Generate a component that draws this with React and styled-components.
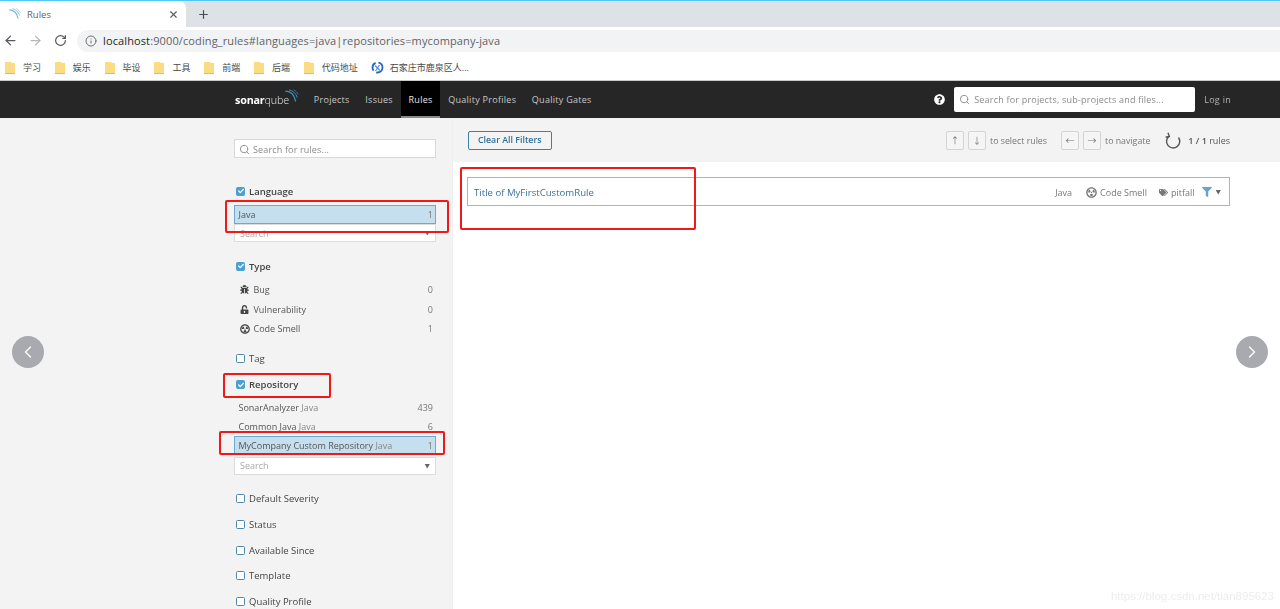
import React from "react";
import styled, { createGlobalStyle } from "styled-components";
import { ArrowLeft, ArrowRight, RotateCw, Info, X, Plus, Search, ChevronLeft, ChevronRight } from "lucide-react";
import { FaBug, FaUnlockAlt, FaRadiationAlt, FaTags, FaFilter, FaQuestionCircle, FaCheck } from "react-icons/fa";

const GlobalStyle = createGlobalStyle`
  html, body {
    margin: 0;
    padding: 0;
    height: 609px;
    overflow: hidden;
    background: #fff;
    font-family: "Open Sans", "Noto Sans CJK SC", sans-serif;
  }
  * { box-sizing: border-box; }
`;

const Screen = styled.div`
  position: relative;
  width: 1280px;
  height: 609px;
  overflow: hidden;
  display: flex;
  flex-direction: column;
  filter: blur(0.3px);
`;

/* browser chrome */
const TabStrip = styled.div`
  height: 27px;
  flex: none;
  display: flex;
  align-items: stretch;
  background: #dee1e6;
  border-top: 1px solid #4fc8f5;
`;

const Tab = styled.div`
  width: 186px;
  display: flex;
  align-items: center;
  padding: 0 7px 0 9px;
  background: #fff;
  border-top-right-radius: 7px;
  color: #5f6368;
  font-size: 9.5px;
`;

const TabTitle = styled.span`
  flex: 1;
  margin-left: 6px;
`;

const NewTab = styled.div`
  width: 34px;
  display: flex;
  align-items: center;
  justify-content: center;
  color: #4a4d51;
`;

const AddressRow = styled.div`
  height: 27px;
  flex: none;
  display: flex;
  align-items: center;
  padding: 0 0 0 1px;
  gap: 7px;
  background: #fff;
`;

const NavIcon = styled.span`
  display: flex;
  width: 18px;
  justify-content: center;
  color: ${({ $off }) => ($off ? "#b4b6b9" : "#55585c")};
  margin-right: ${({ $gap }) => $gap || 0}px;
`;

const UrlPill = styled.div`
  flex: 1;
  height: 22px;
  display: flex;
  align-items: center;
  gap: 6px;
  padding-left: 8px;
  background: #f1f3f4;
  border-radius: 11px 0 0 11px;
  color: #5f6368;
  font-size: 11px;
  letter-spacing: 0.12px;
`;

const UrlHost = styled.span`
  color: #25282b;
`;

const Bookmarks = styled.div`
  height: 27px;
  flex: none;
  display: flex;
  align-items: center;
  padding-left: 5px;
  background: #fff;
  border-bottom: 1px solid #c9cacb;
`;

const Bookmark = styled.div`
  display: flex;
  align-items: center;
  width: ${({ $w }) => $w || 49.8}px;
  gap: ${({ $gap }) => $gap || 8}px;
  color: #4a4a4a;
  font-size: 9px;
  white-space: nowrap;
`;

const FolderIcon = () => (
  <svg width="10" height="13" viewBox="0 0 10 13">
    <path d="M0 1h6l1 1h3v10.5H0z" fill="#fbdc82" />
    <path d="M0 12h10v1H0z" fill="#e3bd57" />
  </svg>
);

const GlobeIcon = () => (
  <svg width="13" height="13" viewBox="0 0 13 13" fill="none">
    <circle cx="6.5" cy="6.5" r="5" stroke="#2b63c4" strokeWidth="1.8" strokeDasharray="9 3" />
    <path d="M4 4.5l5 5M8.5 4l-4 6" stroke="#4a8fdc" strokeWidth="1.2" />
  </svg>
);

const WavesIcon = ({ size = 16, color = "#7fb2d4" }) => (
  <svg width={size} height={size} viewBox="0 0 16 16" fill="none" stroke={color} strokeLinecap="round">
    <path d="M1 2.5c5 .3 9.5 4 11 11" strokeWidth="1.5" />
    <path d="M5 1c4 .8 7.5 4 9 8.5" strokeWidth="1.1" />
    <path d="M10 1c2.2 1 3.8 2.8 5 5" strokeWidth="0.8" />
  </svg>
);

const ReloadIcon = () => (
  <svg width="17" height="17" viewBox="0 0 17 17" fill="none" stroke="#555" strokeWidth="1.4">
    <path d="M14.5 5.5A6.6 6.6 0 1 1 5 4.2" />
    <path d="M4 .8 5.3 4.4 1.6 5.2" />
  </svg>
);

/* sonarqube navbar */
const NavBar = styled.header`
  height: 37px;
  flex: none;
  display: flex;
  align-items: stretch;
  padding-left: 235px;
  background: #262626;
  color: #c8c8c8;
  font-size: 9px;
  letter-spacing: 0.28px;
`;

const Logo = styled.div`
  position: relative;
  display: flex;
  align-items: center;
  width: 71px;
  color: #fff;
  font-size: 10.8px;
  letter-spacing: -0.2px;
`;

const LogoBold = styled.b`
  font-weight: 700;
`;

const LogoLight = styled.span`
  font-weight: 300;
  color: #e6e6e6;
`;

const LogoWaves = styled.span`
  position: absolute;
  left: 50px;
  top: 8px;
`;

const NavLink = styled.div`
  display: flex;
  align-items: center;
  padding: 2px 7.8px 0;
  background: ${({ $active }) => ($active ? "#000" : "transparent")};
  border-bottom: 2px solid ${({ $active }) => ($active ? "#8a8a8a" : "transparent")};
  color: ${({ $active }) => ($active ? "#e8e8e8" : "#c8c8c8")};
`;

const NavRight = styled.div`
  margin-left: auto;
  display: flex;
  align-items: center;
  padding-right: 49px;
`;

const HelpIcon = styled.span`
  display: flex;
  color: #fff;
  margin-right: 9px;
`;

const GlobalSearch = styled.div`
  width: 241px;
  height: 25px;
  display: flex;
  align-items: center;
  gap: 4px;
  padding-left: 5px;
  margin-right: 9px;
  background: #fff;
  border-radius: 2px;
  color: #8a8a8a;
  letter-spacing: 0.2px;
`;

const LogIn = styled.span`
  color: #b4b4b4;
`;

/* page */
const Page = styled.div`
  flex: 1;
  min-height: 0;
  display: flex;
`;

const Sidebar = styled.aside`
  width: 453px;
  flex: none;
  padding: 21px 16px 0 234px;
  background: #f3f3f3;
  border-right: 1px solid #efefef;
  font-size: 9px;
  color: #555;
`;

const RuleSearch = styled.div`
  height: 19px;
  display: flex;
  align-items: center;
  gap: 3px;
  padding: 1px 0 0 4px;
  margin-bottom: 25px;
  background: #fff;
  border: 1px solid #d8d8d8;
  color: #8a8a8a;
  letter-spacing: 0.15px;
`;

const Facet = styled.section`
  margin-bottom: ${({ $mb }) => $mb ?? 13}px;
`;

const FacetHead = styled.div`
  height: 16px;
  display: flex;
  align-items: center;
  gap: 4px;
  padding-left: 2px;
  color: #444;
  font-size: 9.5px;
  font-weight: ${({ $on }) => ($on ? 600 : 400)};
  margin-bottom: ${({ $mb }) => $mb ?? 0}px;
`;

const Check = styled.span`
  width: 9px;
  height: 9px;
  display: flex;
  align-items: center;
  justify-content: center;
  border-radius: 1.5px;
  color: #fff;
  background: ${({ $on }) => ($on ? "#4b9fd5" : "#fff")};
  border: 1px solid ${({ $on }) => ($on ? "#4b9fd5" : "#4f87ab")};
`;

const FacetRow = styled.div`
  height: ${({ $h }) => $h || 19}px;
  display: flex;
  align-items: center;
  padding: 0 2px 0 ${({ $icon }) => ($icon ? 5 : 3.5)}px;
  color: #555;
  background: ${({ $on }) => ($on ? "#c5dfef" : "transparent")};
  border: 1px solid ${({ $on }) => ($on ? "#6ea9cf" : "transparent")};
  margin-bottom: ${({ $mb }) => $mb || 0}px;
`;

const RowIcon = styled.span`
  display: flex;
  width: 13.5px;
  color: #444;
`;

const RowLabel = styled.span`
  flex: 1;
  white-space: nowrap;
`;

const RowSub = styled.span`
  color: #888;
`;

const Count = styled.span`
  color: #777;
`;

const FacetSearch = styled.div`
  height: 18px;
  display: flex;
  align-items: center;
  justify-content: space-between;
  padding: 0 5px;
  background: #fff;
  border: 1px solid #dcdcdc;
  color: #a8a8a8;
`;

const Caret = styled.span`
  font-size: 5.5px;
  color: #666;
`;

const Main = styled.main`
  flex: 1;
  min-width: 0;
  background: #fff;
`;

const MainBar = styled.div`
  height: 44px;
  display: flex;
  align-items: center;
  padding: 1px 50px 0 15px;
  background: #f3f3f3;
  color: #777;
  font-size: 9px;
`;

const ClearButton = styled.div`
  height: 19px;
  display: flex;
  align-items: center;
  padding: 0 9px;
  margin-top: -1px;
  background: #f3f3f3;
  border: 1px solid #3f7ea8;
  border-radius: 2px;
  color: #2f6f9a;
  font-size: 8.8px;
  font-weight: 600;
`;

const BarRight = styled.div`
  margin-left: auto;
  display: flex;
  align-items: center;
`;

const Key = styled.span`
  width: 18px;
  height: 19px;
  display: flex;
  align-items: center;
  justify-content: center;
  margin-right: 4px;
  background: #f5f5f5;
  border: 1px solid #d4d4d4;
  border-radius: 2px;
  color: #777;
  font-size: 9px;
`;

const KeyHint = styled.span`
  margin: 0 14px 0 0;
  font-size: 8.8px;
`;

const Reload = styled.span`
  display: flex;
  margin-right: 7px;
`;

const Total = styled.span`
  color: #555;
`;

const TotalNum = styled.b`
  font-weight: 600;
`;

const RuleList = styled.div`
  padding: 15px 50px 0 14px;
`;

const RuleCard = styled.div`
  height: 29px;
  display: flex;
  align-items: center;
  padding: 1px 8px 0 6px;
  border: 1px solid #8cc0d8;
  background: #fff;
  color: #777;
  font-size: 9px;
`;

const RuleTitle = styled.span`
  flex: 1;
  color: #3c7099;
  font-size: 9.6px;
`;

const Meta = styled.span`
  display: flex;
  align-items: center;
  gap: 3px;
  margin-left: ${({ $ml }) => $ml || 0}px;
`;

/* overlays */
const Mark = styled.div`
  position: absolute;
  left: ${({ $x }) => $x}px;
  top: ${({ $y }) => $y}px;
  width: ${({ $w }) => $w}px;
  height: ${({ $h }) => $h}px;
  border: 2.5px solid #f01919;
  border-radius: 2px;
`;

const Slide = styled.div`
  position: absolute;
  top: 336px;
  left: ${({ $x }) => $x}px;
  width: 32px;
  height: 32px;
  display: flex;
  align-items: center;
  justify-content: center;
  border-radius: 50%;
  background: #a9aab0;
  color: #fff;
`;

const Watermark = styled.div`
  position: absolute;
  right: 6px;
  bottom: 7px;
  color: #ededed;
  font-family: "Liberation Sans", sans-serif;
  font-size: 11.5px;
`;

const bookmarks = ["学习", "娱乐", "毕设", "工具", "前端", "后端"];
const navLinks = ["Projects", "Issues", "Rules", "Quality Profiles", "Quality Gates"];
const closedFacets = ["Default Severity", "Status", "Available Since", "Template", "Quality Profile"];

const App = () => (
  <Screen>
    <GlobalStyle />
    <TabStrip>
      <Tab>
        <WavesIcon size={12} />
        <TabTitle>Rules</TabTitle>
        <X size={11} strokeWidth={2.4} color="#55585c" />
      </Tab>
      <NewTab>
        <Plus size={13} strokeWidth={2.2} />
      </NewTab>
    </TabStrip>
    <AddressRow>
      <NavIcon><ArrowLeft size={15} strokeWidth={2} /></NavIcon>
      <NavIcon $off><ArrowRight size={15} strokeWidth={2} /></NavIcon>
      <NavIcon $gap={1}><RotateCw size={13} strokeWidth={2.2} /></NavIcon>
      <UrlPill>
        <Info size={12} strokeWidth={1.8} />
        <span><UrlHost>localhost</UrlHost>:9000/coding_rules#languages=java|repositories=mycompany-java</span>
      </UrlPill>
    </AddressRow>
    <Bookmarks>
      {bookmarks.map((b) => (
        <Bookmark key={b}><FolderIcon />{b}</Bookmark>
      ))}
      <Bookmark $w={67}><FolderIcon />代码地址</Bookmark>
      <Bookmark $w={110} $gap={6}><GlobeIcon />石家庄市鹿泉区人...</Bookmark>
    </Bookmarks>
    <NavBar>
      <Logo>
        <LogoBold>sonar</LogoBold><LogoLight>qube</LogoLight>
        <LogoWaves><WavesIcon size={14} color="#3f8fbf" /></LogoWaves>
      </Logo>
      {navLinks.map((l) => (
        <NavLink key={l} $active={l === "Rules"}>{l}</NavLink>
      ))}
      <NavRight>
        <HelpIcon><FaQuestionCircle size={11} /></HelpIcon>
        <GlobalSearch>
          <Search size={11} strokeWidth={2} />
          Search for projects, sub-projects and files...
        </GlobalSearch>
        <LogIn>Log in</LogIn>
      </NavRight>
    </NavBar>
    <Page>
      <Sidebar>
        <RuleSearch>
          <Search size={11} strokeWidth={2} />
          Search for rules...
        </RuleSearch>
        <Facet $mb={16}>
          <FacetHead $on $mb={6}><Check $on><FaCheck size={6} /></Check>Language</FacetHead>
          <FacetRow $on><RowLabel>Java</RowLabel><Count>1</Count></FacetRow>
          <FacetSearch>Search<Caret>▼</Caret></FacetSearch>
        </Facet>
        <Facet $mb={12}>
          <FacetHead $on $mb={6}><Check $on><FaCheck size={6} /></Check>Type</FacetHead>
          <FacetRow $icon $h={19.5}><RowIcon><FaBug size={9} /></RowIcon><RowLabel>Bug</RowLabel><Count>0</Count></FacetRow>
          <FacetRow $icon $h={19.5}><RowIcon><FaUnlockAlt size={9} /></RowIcon><RowLabel>Vulnerability</RowLabel><Count>0</Count></FacetRow>
          <FacetRow $icon $h={19.5}><RowIcon><FaRadiationAlt size={10} /></RowIcon><RowLabel>Code Smell</RowLabel><Count>1</Count></FacetRow>
        </Facet>
        <FacetHead $mb={10}><Check />Tag</FacetHead>
        <Facet $mb={16}>
          <FacetHead $on $mb={5}><Check $on><FaCheck size={6} /></Check>Repository</FacetHead>
          <FacetRow><RowLabel>SonarAnalyzer <RowSub>Java</RowSub></RowLabel><Count>439</Count></FacetRow>
          <FacetRow><RowLabel>Common Java <RowSub>Java</RowSub></RowLabel><Count>6</Count></FacetRow>
          <FacetRow $on $mb={2}><RowLabel>MyCompany Custom Repository <RowSub>Java</RowSub></RowLabel><Count>1</Count></FacetRow>
          <FacetSearch>Search<Caret>▼</Caret></FacetSearch>
        </Facet>
        {closedFacets.map((f) => (
          <FacetHead key={f} $mb={9.75}><Check />{f}</FacetHead>
        ))}
      </Sidebar>
      <Main>
        <MainBar>
          <ClearButton>Clear All Filters</ClearButton>
          <BarRight>
            <Key>↑</Key><Key>↓</Key>
            <KeyHint>to select rules</KeyHint>
            <Key>←</Key><Key>→</Key>
            <KeyHint>to navigate</KeyHint>
            <Reload><ReloadIcon /></Reload>
            <Total><TotalNum>1 / 1</TotalNum> rules</Total>
          </BarRight>
        </MainBar>
        <RuleList>
          <RuleCard>
            <RuleTitle>Title of MyFirstCustomRule</RuleTitle>
            <Meta>Java</Meta>
            <Meta $ml={14}><FaRadiationAlt size={11} />Code Smell</Meta>
            <Meta $ml={12}><FaTags size={9} color="#777" />pitfall</Meta>
            <Meta $ml={8}><FaFilter size={10} color="#6aa3c8" /><Caret>▼</Caret></Meta>
          </RuleCard>
        </RuleList>
      </Main>
    </Page>
    <Mark $x={225} $y={200} $w={224} $h={33} />
    <Mark $x={460} $y={167} $w={236} $h={63} />
    <Mark $x={223} $y={373} $w={108} $h={25} />
    <Mark $x={219} $y={431} $w={226} $h={24} />
    <Slide $x={12}><ChevronLeft size={20} strokeWidth={1.5} /></Slide>
    <Slide $x={1236}><ChevronRight size={20} strokeWidth={1.5} /></Slide>
    <Watermark>https://blog.csdn.net/tian895623</Watermark>
  </Screen>
);

export default App;
